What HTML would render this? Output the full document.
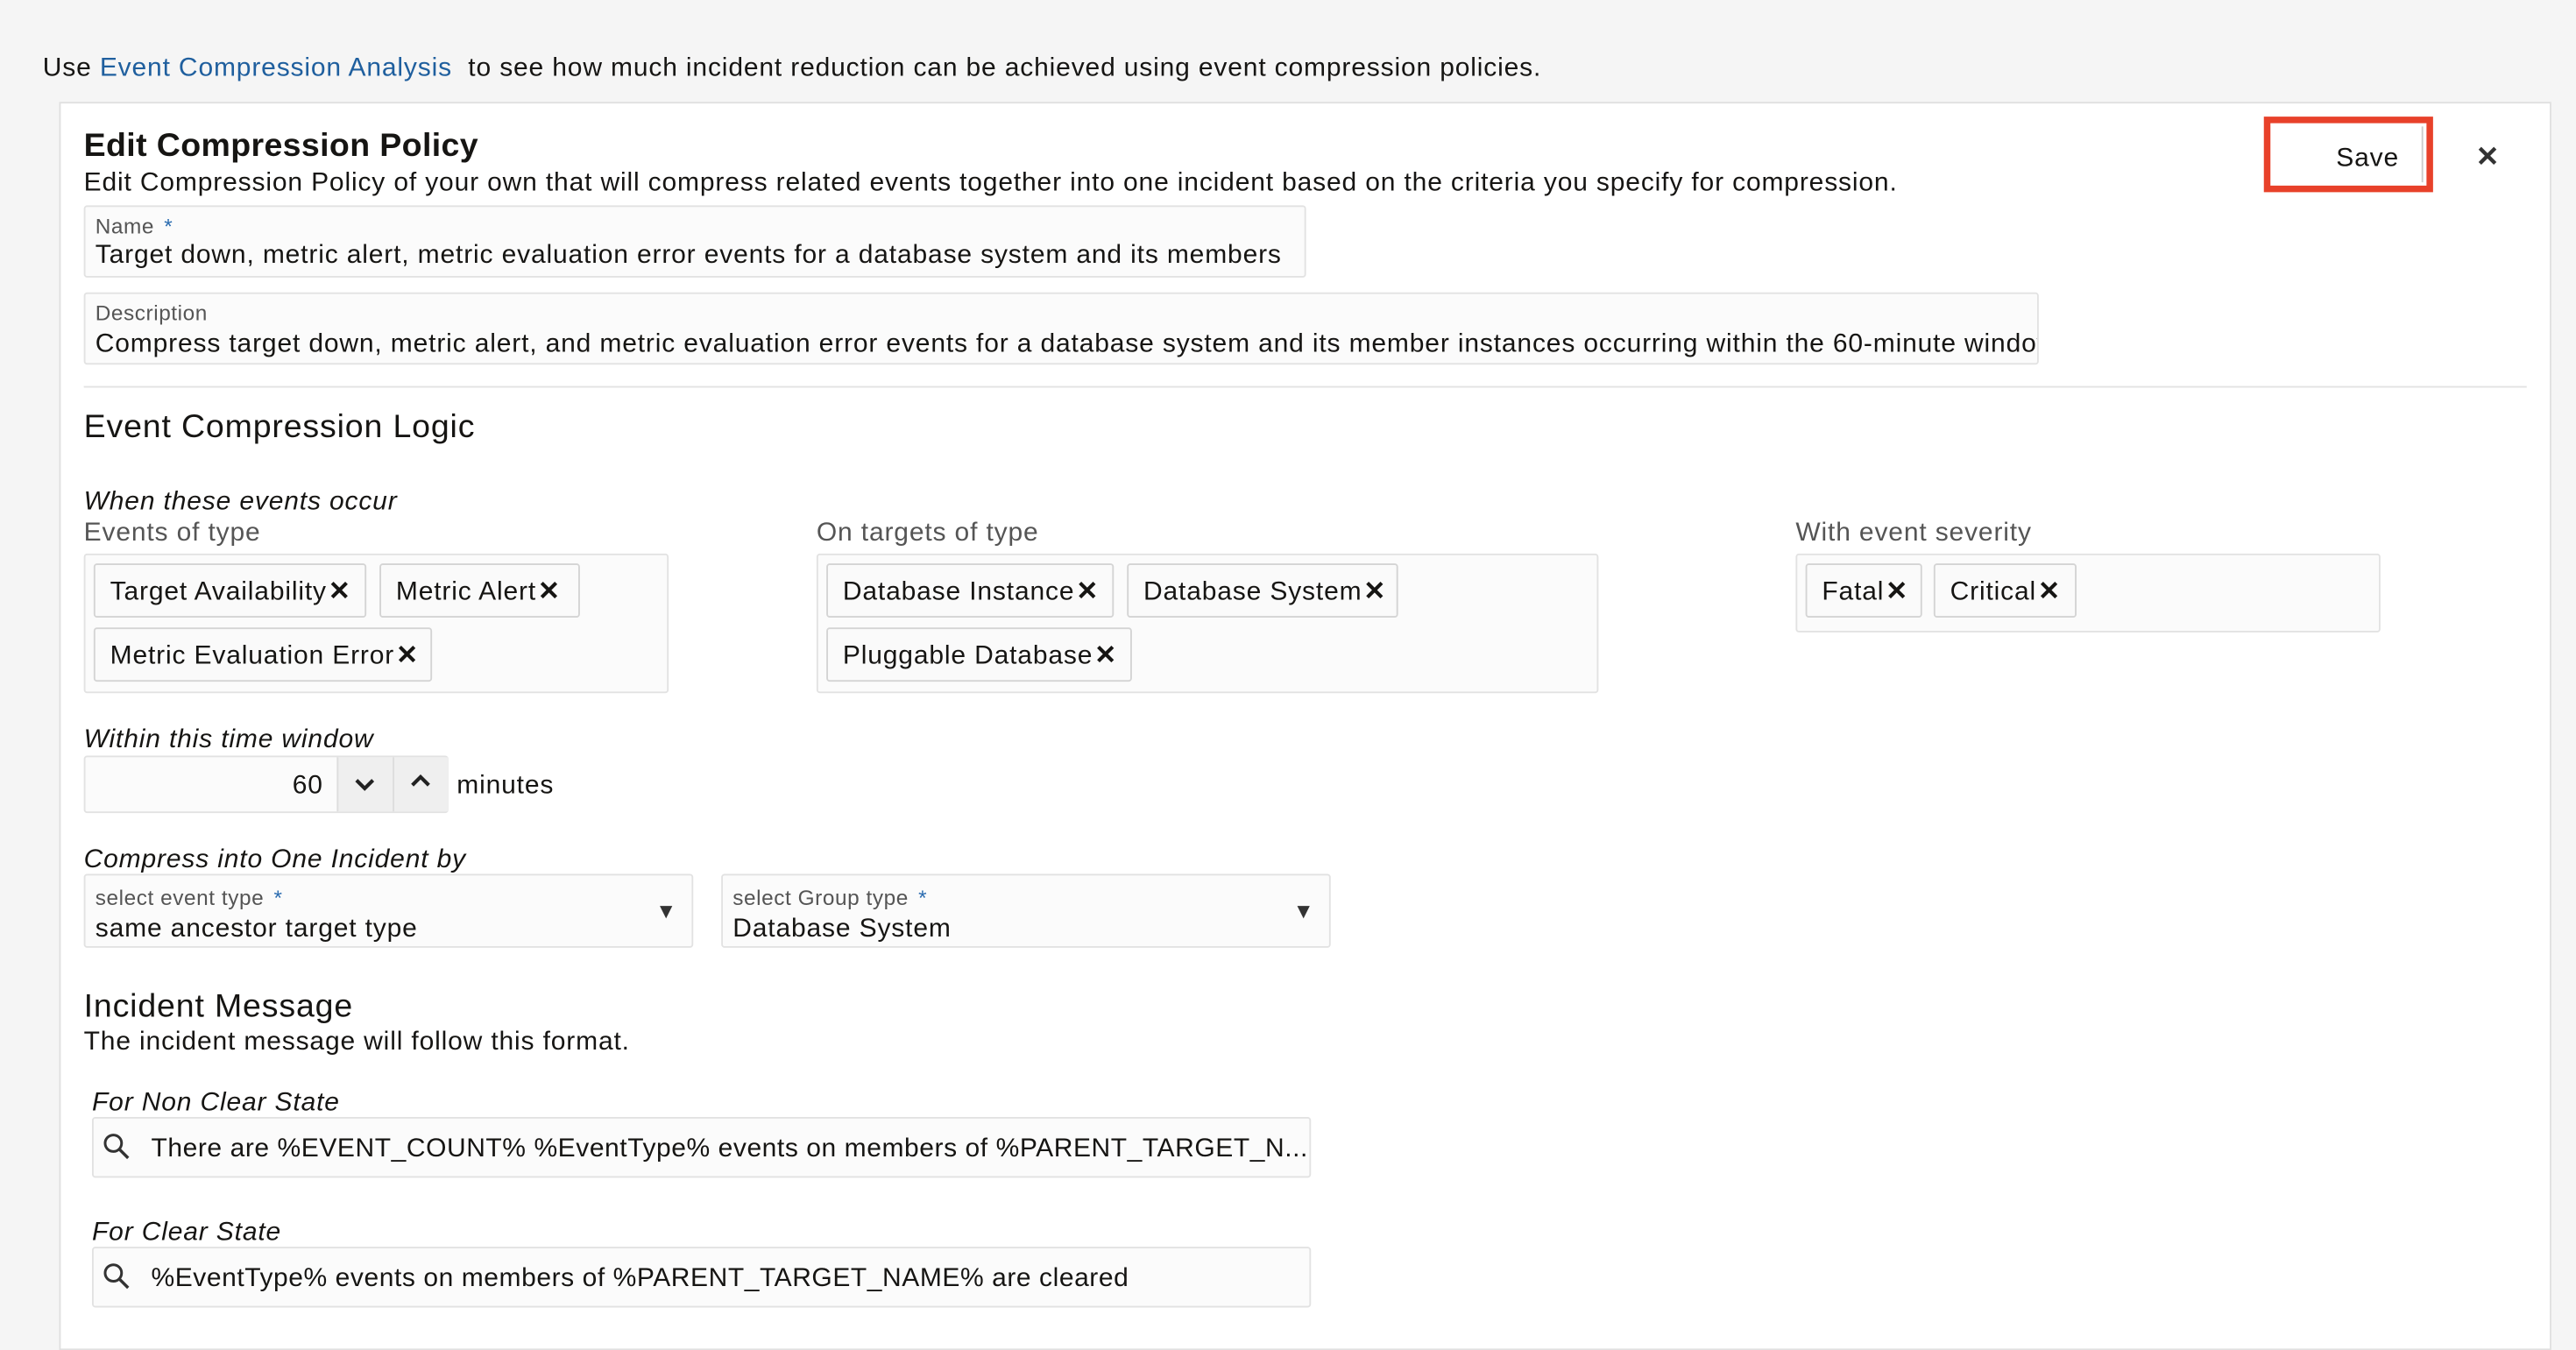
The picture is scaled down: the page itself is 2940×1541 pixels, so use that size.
<!DOCTYPE html>
<html><head><meta charset="utf-8">
<style>
html,body{margin:0;padding:0;}
body{width:2940px;height:1534px;overflow:hidden;background:#f5f5f5;font-family:"Liberation Sans",sans-serif;color:#161513;}
#w{position:absolute;left:0;top:0;width:1568px;height:818px;transform:scale(1.875);transform-origin:0 0;letter-spacing:0.45px;}
.a{position:absolute;white-space:nowrap;}
.f{position:absolute;background:#fbfbfb;border:1px solid #e2e2e2;border-radius:2px;box-sizing:border-box;overflow:hidden;}
.lbl{position:absolute;left:6px;top:4px;font-size:13px;color:#555;letter-spacing:0.3px;}
.val{position:absolute;left:6px;font-size:16px;color:#161513;white-space:nowrap;}
.req{color:#2b6cb0;margin-left:6px;}
.chip{position:absolute;height:33px;box-sizing:border-box;border:1px solid #d4d4d4;background:#fafafa;border-radius:2px;font-size:16px;line-height:33px;padding-left:9px;white-space:nowrap;}
.chip b{font-weight:bold;font-size:16px;margin-left:1px;}
.it{font-style:italic;font-size:16px;}
.g{color:#555;font-size:16px;}
h2{margin:0;font-weight:normal;font-size:20px;}
</style></head><body><div id="w">
<div class="a" style="left:26px;top:33px;font-size:16px;">Use <span style="color:#1f5f9e">Event Compression Analysis</span>&nbsp; to see how much incident reduction can be achieved using event compression policies.</div>
<div style="position:absolute;left:36px;top:62px;width:1517px;height:760px;background:#fff;border:1px solid #e0e0e0;box-sizing:border-box;"></div>
<div class="a" style="left:51px;top:78px;font-size:20px;font-weight:bold;letter-spacing:0.2px;">Edit Compression Policy</div>
<div class="a" style="left:51px;top:103px;font-size:16px;">Edit Compression Policy of your own that will compress related events together into one incident based on the criteria you specify for compression.</div>
<div style="position:absolute;left:1378px;top:71px;width:103px;height:46px;border:4px solid #e8412a;box-sizing:border-box;background:#fff;"></div>
<div style="position:absolute;left:1474px;top:77px;width:1px;height:34px;background:#ccc;"></div>
<div class="a" style="left:1422px;top:88px;font-size:16px;">Save</div>
<div class="a" style="left:1507px;top:86px;font-size:17px;font-weight:bold;color:#333;">✕</div>

<div class="f" style="left:51px;top:125px;width:744px;height:44px;"><div class="lbl">Name<span class="req">*</span></div><div class="val" style="top:21px;">Target down, metric alert, metric evaluation error events for a database system and its members</div></div>
<div class="f" style="left:51px;top:178px;width:1190px;height:44px;"><div class="lbl">Description</div><div class="val" style="top:22px;">Compress target down, metric alert, and metric evaluation error events for a database system and its member instances occurring within the 60-minute window</div></div>
<div style="position:absolute;left:51px;top:235px;width:1487px;height:1px;background:#e3e3e3;"></div>
<h2 class="a" style="left:51px;top:249px;">Event Compression Logic</h2>
<div class="a it" style="left:51px;top:297px;">When these events occur</div>
<div class="a g" style="left:51px;top:316px;">Events of type</div>
<div class="a g" style="left:497px;top:316px;">On targets of type</div>
<div class="a g" style="left:1093px;top:316px;">With event severity</div>
<div class="f" style="left:51px;top:337px;width:356px;height:85px;"></div>
<div class="chip" style="left:57px;top:343px;width:166px;">Target Availability<b>✕</b></div>
<div class="chip" style="left:231px;top:343px;width:122px;">Metric Alert<b>✕</b></div>
<div class="chip" style="left:57px;top:382px;width:206px;">Metric Evaluation Error<b>✕</b></div>
<div class="f" style="left:497px;top:337px;width:476px;height:85px;"></div>
<div class="chip" style="left:503px;top:343px;width:175px;">Database Instance<b>✕</b></div>
<div class="chip" style="left:686px;top:343px;width:165px;">Database System<b>✕</b></div>
<div class="chip" style="left:503px;top:382px;width:186px;">Pluggable Database<b>✕</b></div>
<div class="f" style="left:1093px;top:337px;width:356px;height:48px;"></div>
<div class="chip" style="left:1099px;top:343px;width:71px;">Fatal<b>✕</b></div>
<div class="chip" style="left:1177px;top:343px;width:87px;">Critical<b>✕</b></div>

<div class="a it" style="left:51px;top:442px;">Within this time window</div>
<div class="f" style="left:51px;top:460px;width:222px;height:35px;"></div>
<div class="a" style="left:178px;top:470px;font-size:16px;">60</div>
<div style="position:absolute;left:205px;top:461px;width:67px;height:33px;background:#efefef;border-left:1px solid #ddd;"></div>
<div style="position:absolute;left:239px;top:461px;width:1px;height:33px;background:#ddd;"></div>
<svg style="position:absolute;left:214px;top:471px" width="16" height="14"><path d="M3 4l5 5 5-5" fill="none" stroke="#222" stroke-width="2.2"/></svg>
<svg style="position:absolute;left:248px;top:469px" width="16" height="14"><path d="M3 9l5-5 5 5" fill="none" stroke="#222" stroke-width="2.2"/></svg>
<div class="a" style="left:278px;top:470px;font-size:16px;">minutes</div>

<div class="a it" style="left:51px;top:515px;">Compress into One Incident by</div>
<div class="f" style="left:51px;top:532px;width:371px;height:45px;"><div class="lbl" style="top:6px">select event type<span class="req">*</span></div><div class="val" style="top:24px;">same ancestor target type</div></div>
<div class="a" style="left:399px;top:547px;font-size:13px;color:#333;">▼</div>
<div class="f" style="left:439px;top:532px;width:371px;height:45px;"><div class="lbl" style="top:6px">select Group type<span class="req">*</span></div><div class="val" style="top:24px;">Database System</div></div>
<div class="a" style="left:787px;top:547px;font-size:13px;color:#333;">▼</div>

<h2 class="a" style="left:51px;top:602px;">Incident Message</h2>
<div class="a" style="left:51px;top:626px;font-size:16px;">The incident message will follow this format.</div>
<div class="a it" style="left:56px;top:663px;">For Non Clear State</div>
<div class="f" style="left:56px;top:680px;width:742px;height:37px;"><div class="val" style="left:35px;top:10px;letter-spacing:0.3px;">There are %EVENT_COUNT% %EventType% events on members of %PARENT_TARGET_N...</div></div>
<svg style="position:absolute;left:62px;top:689px" width="18" height="18"><circle cx="7" cy="7" r="5" fill="none" stroke="#333" stroke-width="1.6"/><path d="M11 11l5 5" stroke="#333" stroke-width="1.8"/></svg>
<div class="a it" style="left:56px;top:742px;">For Clear State</div>
<div class="f" style="left:56px;top:759px;width:742px;height:37px;"><div class="val" style="left:35px;top:10px;letter-spacing:0.3px;">%EventType% events on members of %PARENT_TARGET_NAME% are cleared</div></div>
<svg style="position:absolute;left:62px;top:768px" width="18" height="18"><circle cx="7" cy="7" r="5" fill="none" stroke="#333" stroke-width="1.6"/><path d="M11 11l5 5" stroke="#333" stroke-width="1.8"/></svg>
</div></body></html>
